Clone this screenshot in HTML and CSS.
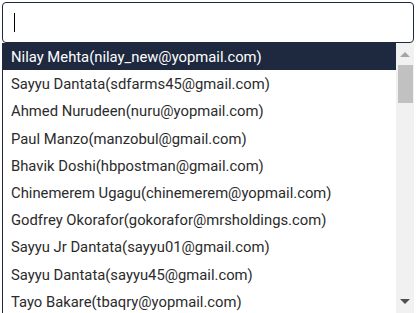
FILE: index.html
```html
<!DOCTYPE html>
<html>
<head>
<meta charset="utf-8">
<link rel="stylesheet" href="styles.css">
</head>
<body>
<div class="combo">
  <div class="input"><span class="caret"></span></div>
  <div class="dropdown">
    <ul class="options">
      <li class="active">Nilay Mehta(nilay_new@yopmail.com)</li>
      <li>Sayyu Dantata(sdfarms45@gmail.com)</li>
      <li>Ahmed Nurudeen(nuru@yopmail.com)</li>
      <li>Paul Manzo(manzobul@gmail.com)</li>
      <li>Bhavik Doshi(hbpostman@gmail.com)</li>
      <li>Chinemerem Ugagu(chinemerem@yopmail.com)</li>
      <li>Godfrey Okorafor(gokorafor@mrsholdings.com)</li>
      <li>Sayyu Jr Dantata(sayyu01@gmail.com)</li>
      <li>Sayyu Dantata(sayyu45@gmail.com)</li>
      <li>Tayo Bakare(tbaqry@yopmail.com)</li>
    </ul>
    <div class="scrollbar">
      <span class="arrow up"></span>
      <span class="thumb"></span>
      <span class="spacer"></span>
      <span class="arrow down"></span>
    </div>
  </div>
</div>
</body>
</html>
```
FILE: styles.css
```css
html, body {
  margin: 0;
  padding: 0;
  background: #ffffff;
}
body {
  font-family: Roboto, "Liberation Sans", sans-serif;
  width: 416px;
  height: 313px;
  overflow: hidden;
}
.combo {
  padding: 2px 2px 0 2px;
  display: flex;
  flex-direction: column;
}
.input {
  box-sizing: border-box;
  height: 41px;
  width: 412px;
  border: 1px solid #1e2940;
  border-radius: 4px;
  padding: 10px 0 0 11px;
}
.caret {
  display: block;
  width: 1px;
  height: 19px;
  background: #000;
}
.dropdown {
  display: flex;
  height: 270px;
  border-left: 1px solid #1e2940;
  width: 411px;
}
.options {
  list-style: none;
  margin: 0;
  padding: 0;
  flex: 1;
}
.options li {
  box-sizing: border-box;
  height: 27.2px;
  padding-top: 1px;
  line-height: 26.2px;
  padding-left: 8px;
  font-size: 14.8px;
  color: #2b2b2b;
  white-space: nowrap;
}
.options li.active {
  background: #1e2940;
  color: #ffffff;
}
.scrollbar {
  width: 18px;
  background: #f1f1f1;
  display: flex;
  flex-direction: column;
  align-items: center;
}
.arrow {
  width: 0;
  height: 0;
  border-left: 5px solid transparent;
  border-right: 5px solid transparent;
}
.arrow.up {
  margin-top: 9px;
  border-bottom: 5px solid #a3a3a3;
}
.arrow.down {
  margin-bottom: 9px;
  border-top: 5px solid #505050;
}
.thumb {
  margin-top: 8px;
  width: 15px;
  height: 38px;
  background: #c1c1c1;
}
.spacer {
  flex: 1;
}
```
